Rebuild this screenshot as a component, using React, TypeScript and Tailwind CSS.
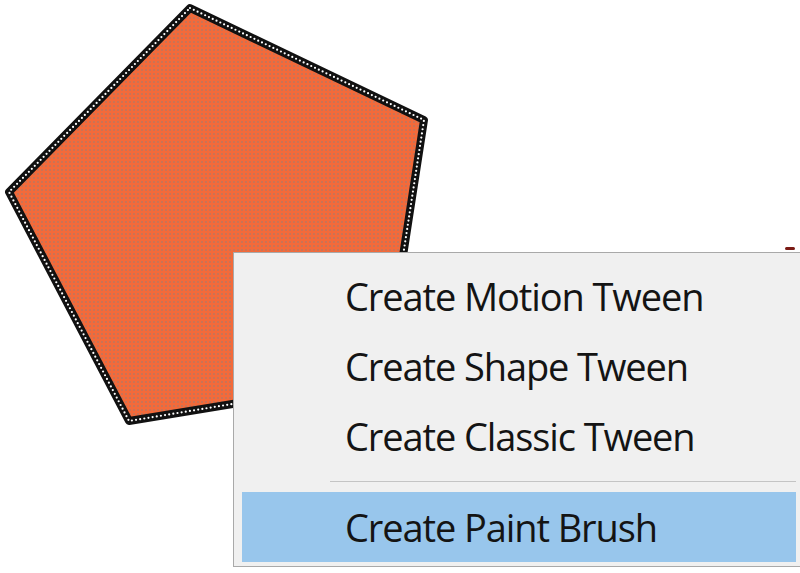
const items = ["Create Motion Tween", "Create Shape Tween", "Create Classic Tween"];

const Pentagon = () => (
  <svg className="absolute left-0 top-0" width="460" height="440" viewBox="0 0 460 440">
    <defs>
      <pattern id="dots" width="4" height="4" patternUnits="userSpaceOnUse">
        <rect width="4" height="4" fill="#f36a3a" />
        <circle cx="2" cy="2" r="0.8" fill="#967f77" />
      </pattern>
    </defs>
    <polygon
      points="190,8 424,120 384,379 129,421 9,192"
      fill="url(#dots)"
      stroke="#111"
      strokeWidth="8"
      strokeLinejoin="round"
    />
    <polygon
      points="190,8 424,120 384,379 129,421 9,192"
      fill="none"
      stroke="#fff"
      strokeWidth="2.2"
      strokeDasharray="0 4.2"
      strokeLinecap="round"
    />
  </svg>
);

export default function App() {
  return (
    <div className="relative w-[800px] h-[573px] overflow-hidden bg-white">
      <Pentagon />
      <div className="absolute left-[785px] top-[247px] w-[10px] h-[3px] bg-[#7a1a14] rounded-sm" />

      <div
        className="absolute left-[233px] top-[252px] w-[567px] border border-r-0 border-[#a9a9a9] bg-[#f0f0f0] pl-[8px] pr-[4px] pt-[8px] pb-[4px] text-[#141414]"
        style={{ fontFamily: '"Open Sans", "Noto Sans", sans-serif' }}
      >
        {items.map((label) => (
          <div key={label} className="h-[70px] flex items-center pl-[103px] text-[38px] leading-none tracking-[-1.1px]">
            {label}
          </div>
        ))}
        <div className="pt-[10px] pb-[10px] pl-[88px]">
          <div className="h-px bg-[#c4c4c4]" />
        </div>
        <div className="h-[70px] flex items-center pl-[103px] text-[38px] leading-none tracking-[-1.1px] bg-[#98c6ec]">
          Create Paint Brush
        </div>
      </div>
    </div>
  );
}
